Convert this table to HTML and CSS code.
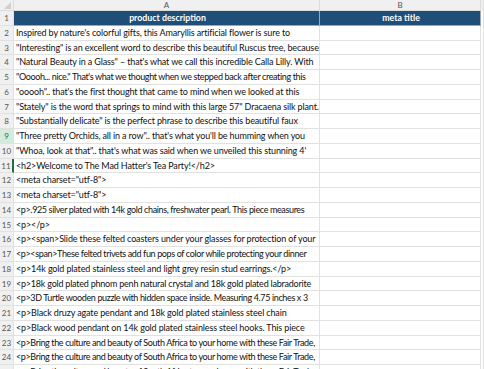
FILE: index.html
```html
<!DOCTYPE html>
<html lang="en">
<head>
    <meta charset="UTF-8">
    <title>Sheet</title>
    <link rel="stylesheet" href="styles.css">
</head>
<body>
    <div class="sheet">
        <div class="row colhead">
            <div class="corner"><span class="tri"></span></div>
            <div class="col">A</div>
            <div class="col">B</div>
        </div>
        <div class="row hdr">
            <div class="num">1</div>
            <div class="cell">product description</div>
            <div class="cell">meta title</div>
        </div>
        <div class="row"><div class="num">2</div><div class="cell">Inspired by nature's colorful gifts, this Amaryllis artificial flower is sure to</div><div class="cell"></div></div>
        <div class="row"><div class="num">3</div><div class="cell">"Interesting" is an excellent word to describe this beautiful Ruscus tree, because</div><div class="cell"></div></div>
        <div class="row"><div class="num">4</div><div class="cell">"Natural Beauty in a Glass" – that's what we call this incredible Calla Lilly. With</div><div class="cell"></div></div>
        <div class="row"><div class="num">5</div><div class="cell tight">"Ooooh... nice." That's what we thought when we stepped back after creating this</div><div class="cell"></div></div>
        <div class="row"><div class="num">6</div><div class="cell">"ooooh".. that's the first thought that came to mind when we looked at this</div><div class="cell"></div></div>
        <div class="row"><div class="num">7</div><div class="cell">"Stately" is the word that springs to mind with this large 57" Dracaena silk plant.</div><div class="cell"></div></div>
        <div class="row"><div class="num">8</div><div class="cell">"Substantially delicate" is the perfect phrase to describe this beautiful faux</div><div class="cell"></div></div>
        <div class="row"><div class="num sel">9</div><div class="cell">"Three pretty Orchids, all in a row".. that's what you'll be humming when you</div><div class="cell"></div></div>
        <div class="row"><div class="num">10</div><div class="cell">"Whoa, look at that".. that's what was said when we unveiled this stunning 4'</div><div class="cell"></div></div>
        <div class="row"><div class="num active">11</div><div class="cell">&lt;h2&gt;Welcome to The Mad Hatter's Tea Party!&lt;/h2&gt;</div><div class="cell"></div></div>
        <div class="row"><div class="num">12</div><div class="cell">&lt;meta charset="utf-8"&gt;</div><div class="cell"></div></div>
        <div class="row"><div class="num">13</div><div class="cell">&lt;meta charset="utf-8"&gt;</div><div class="cell"></div></div>
        <div class="row"><div class="num">14</div><div class="cell tight">&lt;p&gt;.925 silver plated with 14k gold chains, freshwater pearl. This piece measures</div><div class="cell"></div></div>
        <div class="row"><div class="num">15</div><div class="cell">&lt;p&gt;&lt;/p&gt;</div><div class="cell"></div></div>
        <div class="row"><div class="num">16</div><div class="cell">&lt;p&gt;&lt;span&gt;Slide these felted coasters under your glasses for protection of your</div><div class="cell"></div></div>
        <div class="row"><div class="num">17</div><div class="cell tight">&lt;p&gt;&lt;span&gt;These felted trivets add fun pops of color while protecting your dinner</div><div class="cell"></div></div>
        <div class="row"><div class="num">18</div><div class="cell">&lt;p&gt;14k gold plated stainless steel and light grey resin stud earrings.&lt;/p&gt;</div><div class="cell"></div></div>
        <div class="row"><div class="num">19</div><div class="cell snug">&lt;p&gt;18k gold plated phnom penh natural crystal and 18k gold plated labradorite</div><div class="cell"></div></div>
        <div class="row"><div class="num">20</div><div class="cell tight">&lt;p&gt;3D Turtle wooden puzzle with hidden space inside. Measuring 4.75 inches x 3</div><div class="cell"></div></div>
        <div class="row"><div class="num">21</div><div class="cell">&lt;p&gt;Black druzy agate pendant and 18k gold plated stainless steel chain</div><div class="cell"></div></div>
        <div class="row"><div class="num">22</div><div class="cell">&lt;p&gt;Black wood pendant on 14k gold plated stainless steel hooks. This piece</div><div class="cell"></div></div>
        <div class="row"><div class="num">23</div><div class="cell tight">&lt;p&gt;Bring the culture and beauty of South Africa to your home with these Fair Trade,</div><div class="cell"></div></div>
        <div class="row"><div class="num">24</div><div class="cell tight">&lt;p&gt;Bring the culture and beauty of South Africa to your home with these Fair Trade,</div><div class="cell"></div></div>
        <div class="row"><div class="num">25</div><div class="cell tight">&lt;p&gt;Bring the culture and beauty of South Africa to your home with these Fair Trade,</div><div class="cell"></div></div>
    </div>
</body>
</html>
```
FILE: styles.css
```css
body {
    margin: 0;
    background: #fff;
    font-family: Lato, "Open Sans", sans-serif;
    overflow: hidden;
}
.sheet {
    width: 484px;
    height: 369px;
    overflow: hidden;
}
.row {
    display: grid;
    grid-template-columns: 14px 306px 161px 3px;
    height: 14.75px;
    box-sizing: border-box;
}
.row > div {
    box-sizing: border-box;
    border-bottom: 1px solid #e1e1e1;
    border-right: 1px solid #e1e1e1;
    white-space: nowrap;
    overflow: hidden;
}
.row::after {
    content: "";
    border-right: 1px solid #e1e1e1;
}
.colhead {
    height: 11px;
    background: #f0f0f0;
}
.colhead > div {
    border-right: 1px solid #dcdcdc;
    border-bottom: 1px solid #dcdcdc;
}
.col {
    font-size: 8px;
    line-height: 10px;
    color: #555;
    text-align: center;
}
.corner {
    position: relative;
}
.tri {
    position: absolute;
    right: 2px;
    bottom: 1px;
    width: 0;
    height: 0;
    border-left: 7px solid transparent;
    border-bottom: 7px solid #d0d0d0;
}
.num {
    background: #f0f0f0;
    color: #555;
    font-size: 8px;
    line-height: 14px;
    text-align: center;
}
.num.sel {
    background: #d3ecdd;
    color: #1e7145;
}
.num.active {
    border-right: 2px solid #1e7145 !important;
}
.cell {
    font-size: 9px;
    letter-spacing: -0.13px;
    line-height: 14px;
    color: #111;
    padding-left: 2px;
}
.cell.snug {
    letter-spacing: -0.22px;
}
.cell.tight {
    letter-spacing: -0.37px;
}
.hdr .cell {
    background: #1f4e79;
    color: #fff;
    font-weight: bold;
    font-size: 8.8px;
    letter-spacing: 0;
    text-align: center;
    border-bottom-color: #9aa9b8;
    border-right-color: #9aa9b8;
}
```
